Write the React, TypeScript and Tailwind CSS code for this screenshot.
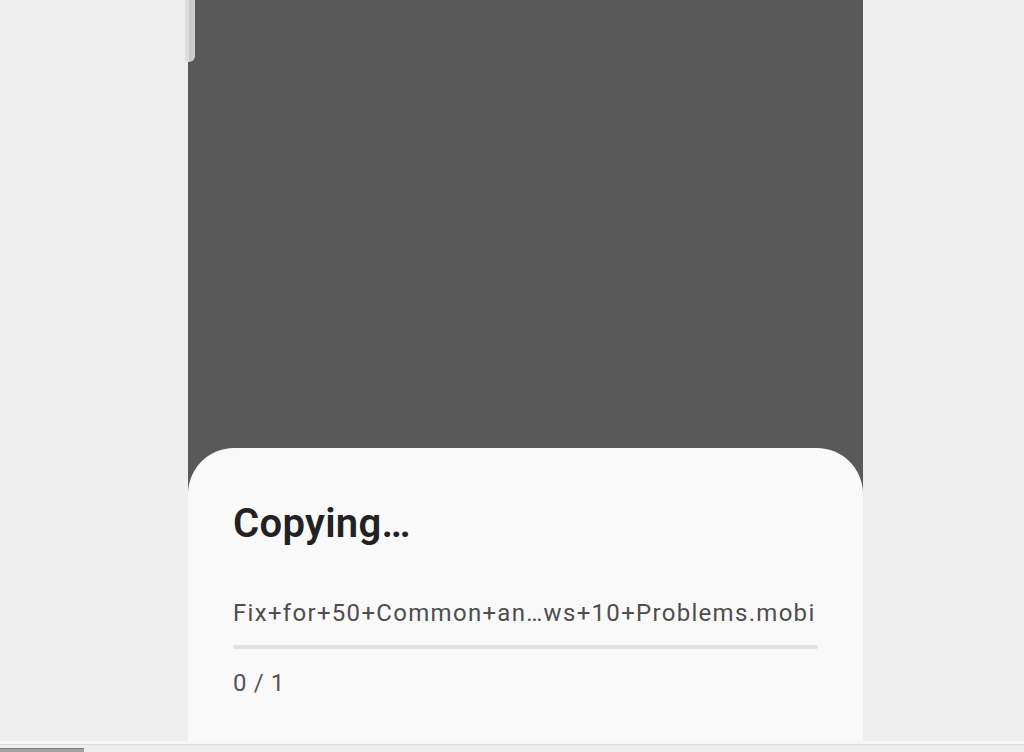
export default function App() {
  return (
    <div
      className="flex h-[752px] w-[1024px] flex-col overflow-hidden bg-[#efefef]"
      style={{ fontFamily: "Roboto, 'Noto Sans', sans-serif" }}
    >
      {/* Screen area */}
      <div className="flex h-[741px] shrink-0">
        <div className="w-[188px] shrink-0" />
        <div className="relative flex w-[675px] shrink-0 flex-col bg-[#595959]">
          {/* scroll indicator */}
          <div className="absolute left-[-3px] top-0 h-[62px] w-[10px] rounded-br-[6px] bg-[#cbcbcb]">
            <div className="h-full w-[4px] bg-[#dedede]" />
          </div>

          <div className="flex-1" />

          {/* Bottom sheet */}
          <div className="flex flex-col rounded-t-[46px] bg-[#f9f9f9] px-[45px] pb-[46px] pt-[56px]">
            <h1 className="text-[40px] font-semibold leading-none tracking-[0.3px] text-[#222222]">
              Copying…
            </h1>
            <p className="mt-[57px] whitespace-nowrap text-[24px] leading-none tracking-[1.3px] text-[#4e4e4e]">
              Fix+for+50+Common+an…ws+10+Problems.mobi
            </p>
            <div className="mt-[20px] h-[4px] w-full rounded-full bg-[#e2e2e2]" />
            <p className="mt-[22px] text-[24px] leading-none tracking-[0.6px] text-[#555555]">0 / 1</p>
          </div>
        </div>
      </div>

      {/* bottom edge / horizontal scrollbar */}
      <div className="h-[3px] bg-[#f6f6f6]" />
      <div className="h-[1px] bg-[#dcdcdc]" />
      <div className="flex flex-1 items-end bg-[#efefef]">
        <div className="h-[4px] w-[84px] border-t border-[#7d7d7d] bg-[#a3a3a3]" />
      </div>
    </div>
  );
}
